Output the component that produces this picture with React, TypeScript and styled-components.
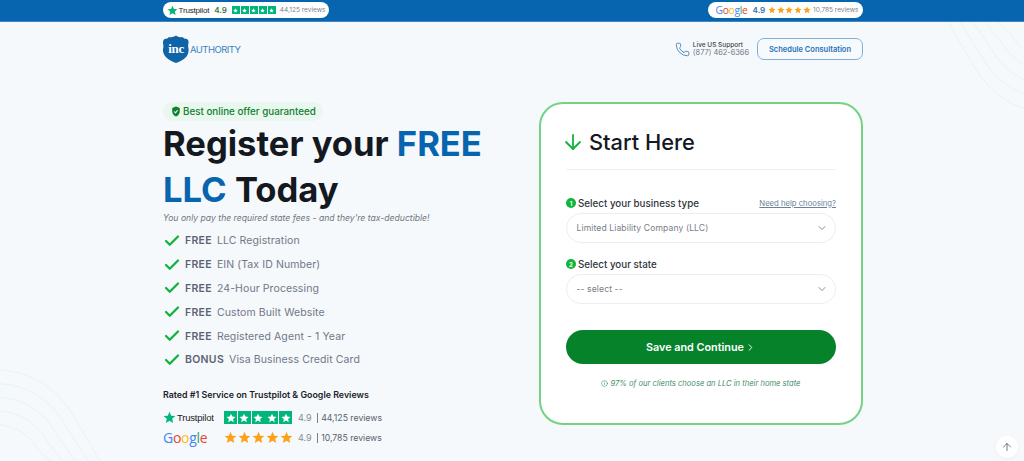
import React from "react";
import styled, { createGlobalStyle } from "styled-components";
import { ArrowDown, ArrowUp, Check, ChevronDown, ChevronRight, Info, Phone } from "lucide-react";

const Global = createGlobalStyle`
  html, body { margin: 0; padding: 0; height: 461px; overflow: hidden; background: #f5f9fc; }
  body { font-family: Inter, "Liberation Sans", sans-serif; color: #14181f; }
  * { box-sizing: border-box; }
`;

const Page = styled.div`
  position: relative;
  width: 1024px;
  height: 461px;
  overflow: hidden;
`;
const Curves = styled.svg<{ $flip?: boolean }>`
  position: absolute;
  width: 110px;
  height: 100px;
  ${(p) => (p.$flip ? "top: 22px; right: -24px; transform: rotate(180deg);" : "bottom: 0; left: 0;")}
`;
const TopBar = styled.div`
  position: relative;
  height: 22px;
  background: #0665ae;
  border-bottom: 1px solid #3f87c4;
`;
const Inner = styled.div`
  position: relative;
  width: 700px;
  margin-left: 163px;
  display: flex;
  justify-content: space-between;
`;
const TopInner = styled(Inner)`
  padding-top: 2px;
  align-items: flex-start;
`;
const BarPill = styled.div<{ $w: number }>`
  width: ${(p) => p.$w}px;
  height: 16px;
  background: #fff;
  border-radius: 8px;
  display: flex;
  align-items: center;
  justify-content: center;
  gap: 4px;
`;
const GoogleBarPill = styled(BarPill)`
  gap: 2.5px;
  padding-left: 3px;
`;
const Score = styled.span<{ $c: string }>`
  font-size: 8px;
  font-weight: 600;
  color: ${(p) => p.$c};
  margin: 0 1px;
`;
const GoogleScore = styled(Score)`
  margin: 0 0.5px 0 2.5px;
`;
const TinyReviews = styled.span`
  font-size: 6.5px;
  color: #7b828c;
  white-space: nowrap;
`;
const StarRow = styled.span<{ $gap: number }>`
  display: inline-flex;
  gap: ${(p) => p.$gap}px;
  align-items: center;
`;
const TpBox = styled.span<{ $s: number }>`
  width: ${(p) => p.$s}px;
  height: ${(p) => p.$s}px;
  background: #00b67a;
  display: inline-flex;
  align-items: center;
  justify-content: center;
`;
const TpLogo = styled.span<{ $size: number }>`
  display: inline-flex;
  align-items: center;
  gap: 1px;
  font-family: "Liberation Sans", Arial, sans-serif;
  font-size: ${(p) => p.$size}px;
  font-weight: 400;
  letter-spacing: -0.2px;
  color: #222;
`;
const GoogleWord = styled.span<{ $size: number }>`
  font-family: "Open Sans", "Liberation Sans", sans-serif;
  font-size: ${(p) => p.$size}px;
  font-weight: 500;
  letter-spacing: -0.3px;
  line-height: 1;
`;
const L = styled.span<{ $c: string }>`
  color: ${(p) => p.$c};
`;

const Header = styled(Inner)`
  align-items: center;
  height: 54px;
`;
const LogoWrap = styled.div`
  display: flex;
  align-items: center;
  gap: 1px;
`;
const Shield = styled.div`
  width: 26px;
  height: 28px;
  display: grid;
  place-items: center;
  & > * { grid-area: 1 / 1; }
`;
const Inc = styled.span`
  font-family: "Liberation Serif", serif;
  font-size: 13px;
  font-weight: 700;
  color: #fff;
  letter-spacing: -0.3px;
  margin-top: -1px;
`;
const Authority = styled.span`
  font-size: 9.5px;
  font-weight: 400;
  letter-spacing: -0.55px;
  color: #3a82bd;
`;
const HeaderRight = styled.div`
  display: flex;
  align-items: center;
`;
const SupportText = styled.div`
  display: flex;
  flex-direction: column;
  margin: 0 8px 0 3px;
  line-height: 8.5px;
`;
const SupportTop = styled.span`
  font-size: 6.5px;
  font-weight: 500;
  color: #3c4148;
`;
const SupportPhone = styled.span`
  font-size: 7.4px;
  color: #6f7680;
`;
const Consult = styled.button`
  width: 106px;
  height: 22px;
  padding: 0;
  background: #f7fafd;
  border: 1px solid #7fb0d9;
  border-radius: 7px;
  font: 600 7.5px Inter, sans-serif;
  color: #1f73b7;
`;

const Hero = styled(Inner)`
  align-items: flex-start;
  margin-top: 26px;
`;
const Left = styled.div`
  width: 340px;
`;
const OfferPill = styled.div`
  display: flex;
  align-items: center;
  gap: 2px;
  height: 19px;
  width: 160px;
  padding-left: 8px;
  border-radius: 10px;
  background: #e9f7ee;
  font-size: 9.8px;
  font-weight: 500;
  color: #0f7f2e;
  white-space: nowrap;
`;
const H1 = styled.h1`
  margin: -1px 0 0;
  font-size: 34.6px;
  font-weight: 700;
  line-height: 46px;
  color: #14181f;
`;
const Blue = styled.span`
  color: #0665ae;
`;
const Sub = styled.p`
  margin: 0;
  font-size: 8.65px;
  line-height: 12px;
  font-style: italic;
  color: #6f7680;
`;
const Features = styled.ul`
  list-style: none;
  margin: 5px 0 0;
  padding: 0;
`;
const Feature = styled.li`
  height: 23.8px;
  display: flex;
  align-items: center;
  font-size: 10.5px;
  color: #717885;
  white-space: nowrap;
  letter-spacing: 0.1px;
`;
const CheckSlot = styled.span`
  width: 22px;
  display: inline-flex;
  flex: none;
  color: #12b23c;
`;
const FeatureBold = styled.b`
  font-weight: 600;
  letter-spacing: 0.3px;
  color: #5c6472;
  margin-right: 5px;
`;
const Rated = styled.div`
  margin-top: 17px;
  font-size: 8.85px;
  font-weight: 600;
  line-height: 12px;
  color: #1d222a;
`;
const RatingRows = styled.div`
  margin-top: 8px;
  display: flex;
  flex-direction: column;
  gap: 2px;
`;
const RatingRow = styled.div`
  display: flex;
  align-items: center;
  height: 18px;
`;
const RatingLogo = styled.div`
  width: 61px;
  display: flex;
  align-items: center;
`;
const RatingStars = styled.div`
  width: 74px;
  display: flex;
`;
const RatingScore = styled.span`
  font-size: 9px;
  color: #858b94;
  margin-right: 5px;
`;
const RatingCount = styled.span`
  font-size: 8.7px;
  color: #5a616b;
  padding-left: 3.5px;
  border-left: 1px solid #7a808a;
  line-height: 10px;
  white-space: nowrap;
`;

const Card = styled.div`
  width: 324px;
  height: 323px;
  background: #fff;
  border: 2px solid #74d284;
  border-radius: 24px;
  padding: 0 25px;
`;
const CardHead = styled.div`
  height: 66px;
  display: flex;
  align-items: center;
  gap: 4px;
  border-bottom: 1px solid #f0f1f2;
  font-size: 21.8px;
  font-weight: 500;
  color: #14181f;
  padding-top: 10px;
  & > svg { margin-left: -5px; flex: none; }
`;
const LabelRow = styled.div<{ $top: number }>`
  margin-top: ${(p) => p.$top}px;
  height: 14px;
  display: flex;
  align-items: center;
  justify-content: space-between;
`;
const Label = styled.label`
  display: inline-flex;
  align-items: center;
  gap: 2px;
  font-size: 9.8px;
  font-weight: 500;
  color: #30353c;
`;
const Num = styled.span`
  width: 10px;
  height: 10px;
  border-radius: 50%;
  background: #10b53b;
  color: #fff;
  font-size: 6px;
  font-weight: 700;
  display: inline-flex;
  align-items: center;
  justify-content: center;
`;
const Help = styled.a`
  font-size: 7.7px;
  color: #6d7f99;
  text-decoration: underline;
`;
const Select = styled.div`
  height: 30px;
  margin-top: 3px;
  border: 1px solid #ebedf0;
  border-radius: 15px;
  padding: 0 7px 0 9.5px;
  display: flex;
  align-items: center;
  justify-content: space-between;
  font-size: 8.6px;
  letter-spacing: 0.1px;
  color: #777e88;
`;
const Submit = styled.button`
  width: 100%;
  height: 34px;
  margin-top: 26px;
  border: 0;
  border-radius: 17px;
  background: #06822b;
  color: #fff;
  font: 600 10.8px Inter, sans-serif;
  display: flex;
  align-items: center;
  justify-content: center;
  gap: 1px;
`;
const Note = styled.div`
  margin-top: 15px;
  display: flex;
  align-items: center;
  justify-content: center;
  gap: 2px;
  font-size: 7.6px;
  font-style: italic;
  color: #44906a;
`;
const ScrollTop = styled.button`
  position: fixed;
  right: 6px;
  bottom: 3px;
  width: 22px;
  height: 22px;
  padding: 0;
  border: 0;
  border-radius: 50%;
  background: #fff;
  box-shadow: 0 1px 3px rgba(0, 0, 0, 0.05);
  display: flex;
  align-items: center;
  justify-content: center;
  color: #4f5762;
`;

const Star = ({ size, color }: { size: number; color: string }) => (
  <svg width={size} height={size} viewBox="0 0 24 24" style={{ display: "block" }}>
    <path fill={color} d="M12 1.5l3.1 7.1 7.7.7-5.8 5.1 1.7 7.6L12 18l-6.7 4 1.7-7.6-5.8-5.1 7.7-.7z" />
  </svg>
);
const TpStars = ({ box, gap }: { box: number; gap: number }) => (
  <StarRow $gap={gap}>
    {[0, 1, 2, 3, 4].map((i) => (
      <TpBox key={i} $s={box}>
        <Star size={box - 3} color="#fff" />
      </TpBox>
    ))}
  </StarRow>
);
const GStars = ({ size, gap }: { size: number; gap: number }) => (
  <StarRow $gap={gap}>
    {[0, 1, 2, 3, 4].map((i) => (
      <Star key={i} size={size} color="#fba219" />
    ))}
  </StarRow>
);
const Google = ({ size }: { size: number }) => (
  <GoogleWord $size={size}>
    <L $c="#4285f4">G</L>
    <L $c="#ea4335">o</L>
    <L $c="#fbbc05">o</L>
    <L $c="#4285f4">g</L>
    <L $c="#34a853">l</L>
    <L $c="#ea4335">e</L>
  </GoogleWord>
);
const Trustpilot = ({ size, star }: { size: number; star: number }) => (
  <TpLogo $size={size}>
    <Star size={star} color="#00b67a" />
    Trustpilot
  </TpLogo>
);

const curves = [100, 88, 75, 63, 50];

const CurveArt = ({ flip }: { flip?: boolean }) => (
  <Curves $flip={flip} viewBox="0 0 110 100" fill="none">
    {curves.map((x, i) => {
      const sy = i * 13.7 + 9;
      const k = x / 100;
      return (
        <path
          key={x}
          stroke="#e6f5ee"
          d={`M0 ${sy} C ${32 * k} ${sy + 2}, ${58 * k} ${sy + 18 * k}, ${76 * k} ${sy + 50 * k} L ${x} 100`}
        />
      );
    })}
  </Curves>
);

const features: [string, string][] = [
  ["FREE", "LLC Registration"],
  ["FREE", "EIN (Tax ID Number)"],
  ["FREE", "24-Hour Processing"],
  ["FREE", "Custom Built Website"],
  ["FREE", "Registered Agent - 1 Year"],
  ["BONUS", "Visa Business Credit Card"],
];

export default function App() {
  return (
    <Page>
      <Global />
      <CurveArt />
      <CurveArt flip />
      <TopBar>
        <TopInner>
          <BarPill $w={166}>
            <Trustpilot size={8} star={11} />
            <Score $c="#2f7d3a">4.9</Score>
            <TpStars box={8} gap={1} />
            <TinyReviews>44,125 reviews</TinyReviews>
          </BarPill>
          <GoogleBarPill $w={155}>
            <Google size={10.3} />
            <GoogleScore $c="#2a6fb0">4.9</GoogleScore>
            <GStars size={8} gap={0.6} />
            <TinyReviews>10,785 reviews</TinyReviews>
          </GoogleBarPill>
        </TopInner>
      </TopBar>

      <Header>
        <LogoWrap>
          <Shield>
            <svg width="26" height="28" viewBox="0 0 26 28">
              <path
                fill="#0f64a8"
                d="M13 0.500c1.800 1.500 4 2 6.500 1.500.800 1.300 2.500 2 4.500 2 1.300 1 1.800 2.300 1.500 4-.500 1.800-.500 3.500 0 5.500C26.500 21 21 25 13 28 5 25-.5 21 .000 14c.5-2 .5-3.700 0-5.500C-.300 6.800.200 5 1.500 4c2 0 3.700-.700 4.500-2 2.500.5 4.700 0 7-1.500z"
              />
            </svg>
            <Inc>inc</Inc>
          </Shield>
          <Authority>AUTHORITY</Authority>
        </LogoWrap>
        <HeaderRight>
          <Phone size={15} strokeWidth={1.2} color="#1f6fb0" />
          <SupportText>
            <SupportTop>Live US Support</SupportTop>
            <SupportPhone>(877) 462-6366</SupportPhone>
          </SupportText>
          <Consult>Schedule Consultation</Consult>
        </HeaderRight>
      </Header>

      <Hero>
        <Left>
          <OfferPill>
            <svg width="10" height="11" viewBox="0 0 24 24" preserveAspectRatio="none">
              <path fill="#0f7f2e" d="M12 1l9 3.500v7c0 5.500-3.700 9.800-9 11.500-5.300-1.700-9-6-9-11.500v-7z" />
              <path fill="none" stroke="#e9f7ee" strokeWidth="2.500" d="M8 12l3 3 5-6" />
            </svg>
            Best online offer guaranteed
          </OfferPill>
          <H1>
            Register your <Blue>FREE</Blue>
            <br />
            <Blue>LLC</Blue> Today
          </H1>
          <Sub>You only pay the required state fees - and they're tax-deductible!</Sub>
          <Features>
            {features.map(([b, t]) => (
              <Feature key={t}>
                <CheckSlot>
                  <Check size={18} strokeWidth={3} />
                </CheckSlot>
                <FeatureBold>{b}</FeatureBold>
                {t}
              </Feature>
            ))}
          </Features>
          <Rated>Rated #1 Service on Trustpilot &amp; Google Reviews</Rated>
          <RatingRows>
            <RatingRow>
              <RatingLogo>
                <Trustpilot size={9.5} star={13} />
              </RatingLogo>
              <RatingStars>
                <TpStars box={13} gap={0.8} />
              </RatingStars>
              <RatingScore>4.9</RatingScore>
              <RatingCount>44,125 reviews</RatingCount>
            </RatingRow>
            <RatingRow>
              <RatingLogo>
                <Google size={14} />
              </RatingLogo>
              <RatingStars>
                <GStars size={13} gap={1} />
              </RatingStars>
              <RatingScore>4.9</RatingScore>
              <RatingCount>10,785 reviews</RatingCount>
            </RatingRow>
          </RatingRows>
        </Left>

        <Card>
          <CardHead>
            <ArrowDown size={24} strokeWidth={1.8} color="#12b23c" />
            Start Here
          </CardHead>
          <LabelRow $top={26}>
            <Label>
              <Num>1</Num>
              Select your business type
            </Label>
            <Help>Need help choosing?</Help>
          </LabelRow>
          <Select>
            Limited Liability Company (LLC)
            <ChevronDown size={12} strokeWidth={1.8} />
          </Select>
          <LabelRow $top={14}>
            <Label>
              <Num>2</Num>
              Select your state
            </Label>
          </LabelRow>
          <Select>
            -- select --
            <ChevronDown size={12} strokeWidth={1.8} />
          </Select>
          <Submit>
            Save and Continue
            <ChevronRight size={11} strokeWidth={2} />
          </Submit>
          <Note>
            <Info size={7} />
            97% of our clients choose an LLC in their home state
          </Note>
        </Card>
      </Hero>

      <ScrollTop aria-label="Back to top">
        <ArrowUp size={12} strokeWidth={1.6} />
      </ScrollTop>
    </Page>
  );
}
